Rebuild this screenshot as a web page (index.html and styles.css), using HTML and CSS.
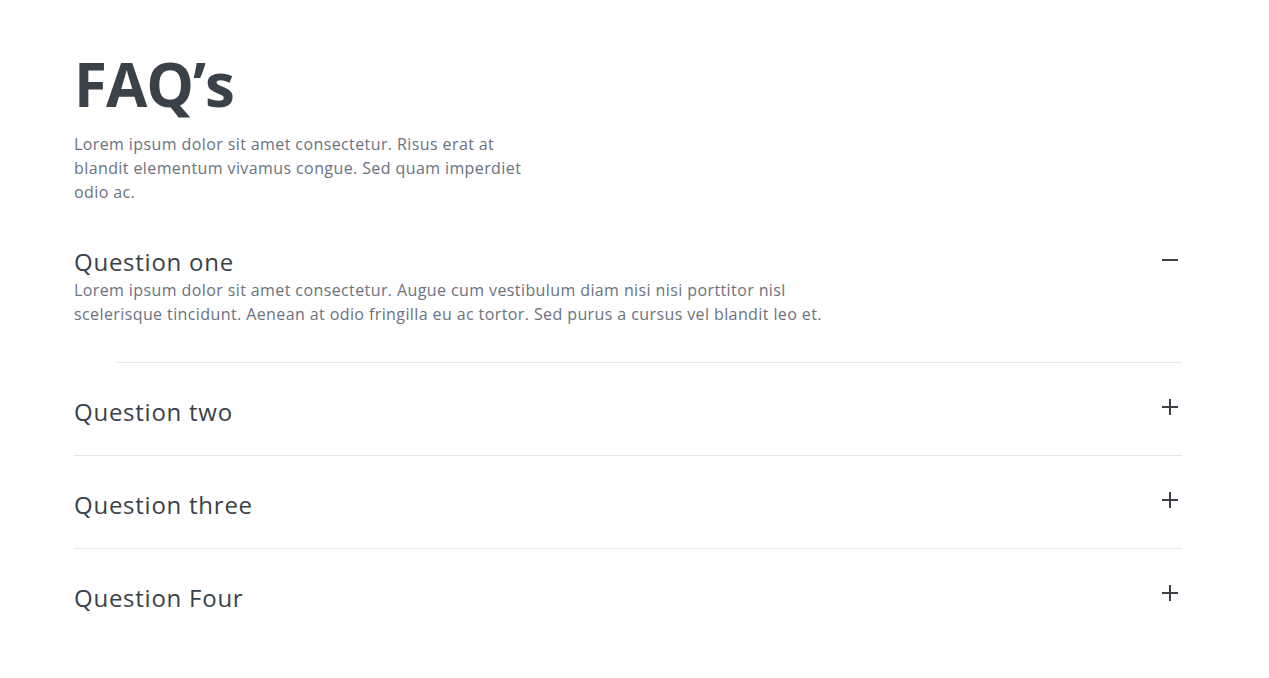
FILE: index.html
```html
<!DOCTYPE html>
<html lang="en">
<head>
<meta charset="utf-8">
<title>FAQ's</title>
<link rel="stylesheet" href="styles.css">
</head>
<body>
<main class="faq">
  <h1 class="faq-title">FAQ’s</h1>
  <p class="faq-intro">Lorem ipsum dolor sit amet consectetur. Risus erat at blandit elementum vivamus congue. Sed quam imperdiet odio ac.</p>
  <ul class="faq-list">
    <li class="faq-item is-open">
      <div class="faq-head">
        <h2 class="faq-question">Question one</h2>
        <svg class="faq-icon icon-minus" viewBox="0 0 24 24" width="24" height="24" aria-hidden="true"><path d="M4 12h16" stroke="currentColor" stroke-width="2" fill="none"/></svg>
      </div>
      <p class="faq-answer">Lorem ipsum dolor sit amet consectetur. Augue cum vestibulum diam nisi nisi porttitor nisl scelerisque tincidunt. Aenean at odio fringilla eu ac tortor. Sed purus a cursus vel blandit leo et.</p>
    </li>
    <li class="faq-item">
      <div class="faq-head">
        <h2 class="faq-question">Question two</h2>
        <svg class="faq-icon" viewBox="0 0 24 24" width="24" height="24" aria-hidden="true"><path d="M4 12h16M12 4v16" stroke="currentColor" stroke-width="2" fill="none"/></svg>
      </div>
    </li>
    <li class="faq-item">
      <div class="faq-head">
        <h2 class="faq-question">Question three</h2>
        <svg class="faq-icon" viewBox="0 0 24 24" width="24" height="24" aria-hidden="true"><path d="M4 12h16M12 4v16" stroke="currentColor" stroke-width="2" fill="none"/></svg>
      </div>
    </li>
    <li class="faq-item">
      <div class="faq-head">
        <h2 class="faq-question">Question Four</h2>
        <svg class="faq-icon" viewBox="0 0 24 24" width="24" height="24" aria-hidden="true"><path d="M4 12h16M12 4v16" stroke="currentColor" stroke-width="2" fill="none"/></svg>
      </div>
    </li>
  </ul>
</main>
</body>
</html>
```
FILE: styles.css
```css
* { box-sizing: border-box; }
html, body { margin: 0; padding: 0; background: #ffffff; }
body {
  font-family: "Open Sans", "Liberation Sans", sans-serif;
  color: #3a4149;
}
.faq {
  width: 1108px;
  margin-left: 74px;
  padding-top: 54px;
}
.faq-title {
  margin: 0;
  font-size: 60px;
  line-height: 60px;
  font-weight: 700;
  letter-spacing: -1px;
  color: #3a4149;
}
.faq-intro {
  margin: 18px 0 0;
  max-width: 472px;
  font-size: 16px;
  line-height: 24px;
  letter-spacing: 0.4px;
  color: #6b7280;
}
.faq-list {
  list-style: none;
  margin: 9px 0 0;
  padding: 0;
}
.faq-item {
  position: relative;
  padding: 33px 0 27px;
}
.faq-item + .faq-item { padding-top: 34px; }
.faq-item + .faq-item::before {
  content: "";
  position: absolute;
  top: 0;
  left: 0;
  right: 0;
  height: 1px;
  background: #e5e7eb;
}
.faq-item:nth-child(2)::before { left: 42px; }
.faq-head {
  display: flex;
  justify-content: space-between;
  align-items: flex-start;
}
.faq-question {
  margin: 0;
  font-size: 24px;
  line-height: 32px;
  font-weight: 500;
  letter-spacing: 0.75px;
  color: #3a4149;
}
.faq-icon {
  flex: none;
  margin-top: -1px;
  color: #3a4149;
}
.faq-icon.icon-minus { margin-top: 2px; }
.faq-answer {
  margin: 0 0 9px;
  max-width: 770px;
  font-size: 16px;
  line-height: 24px;
  letter-spacing: 0.4px;
  color: #6b7280;
}
```
